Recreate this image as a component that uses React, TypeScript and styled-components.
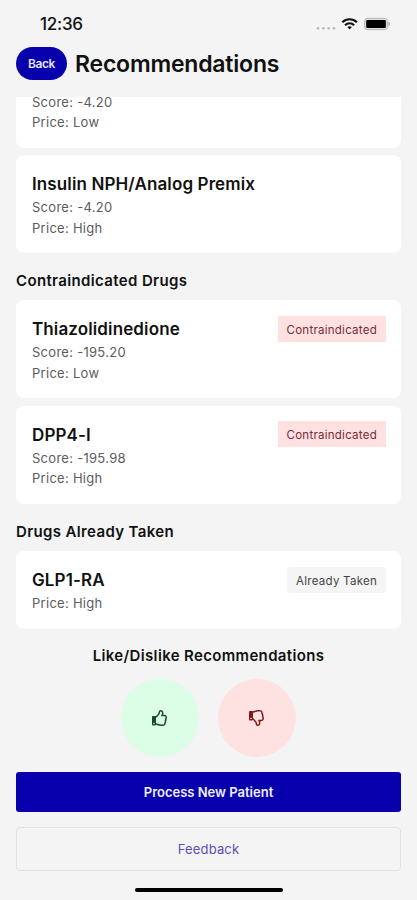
import React from 'react';
import styled, { createGlobalStyle, css } from 'styled-components';
import { FaRegThumbsUp, FaRegThumbsDown } from 'react-icons/fa';

const GlobalStyle = createGlobalStyle`
  * { box-sizing: border-box; }
  body { margin: 0; background: #f4f4f4; }
  button { font: inherit; border: 0; padding: 0; }
`;

const Screen = styled.div`
  width: 417px;
  height: 900px;
  overflow: hidden;
  display: flex;
  flex-direction: column;
  background: #f4f4f4;
  color: #111;
  font-family: Inter, 'Liberation Sans', sans-serif;
`;

const StatusBar = styled.div`
  height: 47px;
  flex: none;
  display: flex;
  justify-content: space-between;
  padding: 14px 26px 0 40px;
`;

const Clock = styled.span`
  font-size: 17px;
  line-height: 21px;
  font-weight: 500;
  letter-spacing: -0.25px;
`;

const StatusIcons = styled.div`
  display: flex;
  height: 20px;
  align-items: center;
`;

const Header = styled.header`
  height: 50px;
  flex: none;
  display: flex;
  align-items: flex-start;
  gap: 8px;
  padding: 0 16px;
`;

const BackButton = styled.button`
  width: 51px;
  height: 33px;
  border-radius: 17px;
  background: #0800ad;
  color: #e4e4fa;
  font-size: 12px;
  font-weight: 600;
  letter-spacing: -0.35px;
`;

const Title = styled.h1`
  margin: 0;
  font-size: 23px;
  line-height: 34px;
  font-weight: 600;
  letter-spacing: -0.2px;
`;

const Results = styled.main`
  height: 531.5px;
  flex: none;
  overflow: hidden;
  display: flex;
  flex-direction: column;
  padding: 0 16px;
`;

const CardStack = styled.div`
  display: flex;
  flex-direction: column;
  gap: 7.5px;
`;

const Card = styled.article<{ $clipped?: boolean }>`
  display: flex;
  justify-content: space-between;
  align-items: flex-start;
  padding: 15.5px 15px 15px 16px;
  border-radius: 8px;
  background: #fff;
  ${(p) => p.$clipped && css`
    height: 50.5px;
    padding-top: 0;
    padding-bottom: 15px;
    align-items: flex-end;
    border-radius: 0 0 8px 8px;
  `}
`;

const DrugName = styled.h3`
  margin: 0;
  padding-top: 1.5px;
  font-size: 17px;
  line-height: 25px;
  font-weight: 600;
  letter-spacing: 0.12px;
`;

const Detail = styled.p`
  margin: 0;
  font-size: 13px;
  line-height: 20.5px;
  color: #5c5c5c;
  letter-spacing: 0.28px;
`;

const Badge = styled.span<{ $tone: 'danger' | 'neutral' }>`
  height: 26px;
  padding: 0 9px;
  border-radius: ${(p) => (p.$tone === 'danger' ? 1 : 4)}px;
  font-size: 11.5px;
  line-height: 28px;
  letter-spacing: 0.26px;
  background: ${(p) => (p.$tone === 'danger' ? '#ffe1e1' : '#f5f5f5')};
  color: ${(p) => (p.$tone === 'danger' ? '#762c38' : '#444')};
`;

const SectionTitle = styled.h2`
  margin: 0;
  height: 47.5px;
  padding-top: 16px;
  font-size: 15px;
  line-height: 23px;
  font-weight: 600;
  letter-spacing: 0.36px;
`;

const FooterArea = styled.footer`
  display: flex;
  flex-direction: column;
  padding: 16.5px 16px 0;
`;

const Prompt = styled.h2`
  margin: 0;
  text-align: center;
  font-size: 15px;
  line-height: 22px;
  font-weight: 600;
  letter-spacing: 0.34px;
`;

const Votes = styled.div`
  display: flex;
  justify-content: center;
  gap: 19px;
  padding: 12px 0 15px;
`;

const VoteButton = styled.button<{ $up?: boolean }>`
  width: 78px;
  height: 78px;
  display: flex;
  align-items: center;
  justify-content: center;
  border-radius: 50%;
  font-size: 16px;
  background: ${(p) => (p.$up ? '#dcfde6' : '#fee2e2')};
  color: ${(p) => (p.$up ? '#164c2d' : '#7f1d1d')};
`;

const ActionButton = styled.button<{ $primary?: boolean }>`
  height: ${(p) => (p.$primary ? 40 : 44)}px;
  border-radius: ${(p) => (p.$primary ? 3 : 4)}px;
  border: ${(p) => (p.$primary ? '0' : '1px solid #e2e2e2')};
  background: ${(p) => (p.$primary ? '#0800ad' : 'transparent')};
  color: ${(p) => (p.$primary ? '#f1f0ff' : '#5b50b8')};
  font-size: 13px;
  font-weight: ${(p) => (p.$primary ? 600 : 400)};
  letter-spacing: ${(p) => (p.$primary ? 0 : 0.15)}px;
  & + & { margin-top: 15px; }
`;

const HomeIndicator = styled.div`
  width: 148px;
  height: 4px;
  flex: none;
  margin: 17px 0 0 135px;
  border-radius: 2px;
  background: #000;
`;

type Drug = { name?: string; score?: string; price: string; badge?: string; tone?: 'danger' | 'neutral' };

const suggested: Drug[] = [
  { score: '-4.20', price: 'Low' },
  { name: 'Insulin NPH/Analog Premix', score: '-4.20', price: 'High' },
];
const contraindicated: Drug[] = [
  { name: 'Thiazolidinedione', score: '-195.20', price: 'Low', badge: 'Contraindicated', tone: 'danger' },
  { name: 'DPP4-I', score: '-195.98', price: 'High', badge: 'Contraindicated', tone: 'danger' },
];
const taken: Drug[] = [{ name: 'GLP1-RA', price: 'High', badge: 'Already Taken', tone: 'neutral' }];

function DrugCards({ drugs }: { drugs: Drug[] }) {
  return (
    <CardStack>
      {drugs.map((d, i) => (
        <Card key={i} $clipped={!d.name}>
          <div>
            {d.name && <DrugName>{d.name}</DrugName>}
            {d.score && <Detail>Score: {d.score}</Detail>}
            <Detail>Price: {d.price}</Detail>
          </div>
          {d.badge && <Badge $tone={d.tone || 'neutral'}>{d.badge}</Badge>}
        </Card>
      ))}
    </CardStack>
  );
}

export default function App() {
  return (
    <Screen>
      <GlobalStyle />
      <StatusBar>
        <Clock>12:36</Clock>
        <StatusIcons>
          <svg width="75" height="20" viewBox="0 0 75 20">
            <g fill="#b9b9b9">
              <circle cx="2" cy="14.3" r="1.3" />
              <circle cx="7.3" cy="14.3" r="1.3" />
              <circle cx="12.6" cy="14.3" r="1.3" />
              <circle cx="17.9" cy="14.3" r="1.3" />
            </g>
            <g fill="none" stroke="#111" strokeWidth="2.1">
              <path d="M26.3 8.2c4.2-4 10.4-4 14.6 0" />
              <path d="M29 11.2c2.7-2.5 6.5-2.5 9.2 0" />
            </g>
            <path d="M31.3 13.1q2.3-1.8 4.6 0l-2.3 2.5z" fill="#111" />
            <rect x="48.6" y="4.3" width="22.8" height="11.4" rx="3" fill="#ddd" stroke="#b5b5b5" />
            <rect x="50.2" y="5.9" width="19.6" height="8.2" rx="1" fill="#000" />
            <path d="M72.5 7.8q3.5 2.2 0 4.4z" fill="#aaa" />
          </svg>
        </StatusIcons>
      </StatusBar>
      <Header>
        <BackButton>Back</BackButton>
        <Title>Recommendations</Title>
      </Header>
      <Results>
        <DrugCards drugs={suggested} />
        <SectionTitle>Contraindicated Drugs</SectionTitle>
        <DrugCards drugs={contraindicated} />
        <SectionTitle>Drugs Already Taken</SectionTitle>
        <DrugCards drugs={taken} />
      </Results>
      <FooterArea>
        <Prompt>Like/Dislike Recommendations</Prompt>
        <Votes>
          <VoteButton $up aria-label="Like"><FaRegThumbsUp /></VoteButton>
          <VoteButton aria-label="Dislike"><FaRegThumbsDown /></VoteButton>
        </Votes>
        <ActionButton $primary>Process New Patient</ActionButton>
        <ActionButton>Feedback</ActionButton>
      </FooterArea>
      <HomeIndicator />
    </Screen>
  );
}
